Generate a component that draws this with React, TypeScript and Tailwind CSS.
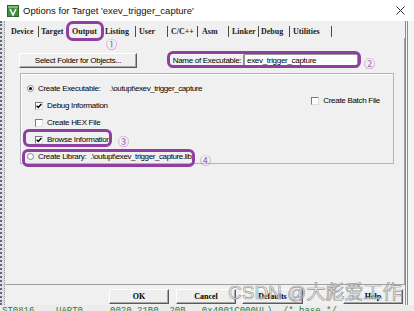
import type { ReactNode } from 'react';

// Keil "Options for Target" dialog, Output tab, with purple hand-drawn marks.

function KeilIcon() {
  return (
    <svg width="12" height="12" viewBox="0 0 12 12" aria-hidden>
      <rect x="0.5" y="0.5" width="11" height="11" fill="#3f8f3a" stroke="#2a6526" />
      <rect x="1" y="1" width="10" height="2" fill="#7fbf6a" />
      <path d="M3 4 L6 10 L9 4" fill="none" stroke="#fff" strokeWidth="1.6" />
    </svg>
  );
}

function Check({ checked }: { checked?: boolean }) {
  return (
    <span className="grid h-[8px] w-[8px] shrink-0 place-items-center border border-b-[#dcdcdc] border-l-[#7a7a7a] border-r-[#dcdcdc] border-t-[#7a7a7a] bg-white">
      {checked && (
        <svg width="6" height="6" viewBox="0 0 6 6" aria-hidden>
          <path d="M0.6 2.8 L2.3 4.5 L5.4 1" fill="none" stroke="#000" strokeWidth="1.5" />
        </svg>
      )}
    </span>
  );
}

function Radio({ checked }: { checked?: boolean }) {
  return (
    <span className="grid h-[7px] w-[7px] shrink-0 place-items-center rounded-full border border-[#8a8a8a] bg-white">
      {checked && <span className="h-[3px] w-[3px] rounded-full bg-black" />}
    </span>
  );
}

function Row({ children, className = '' }: { children: ReactNode; className?: string }) {
  return <div className={'flex h-[17px] items-center whitespace-nowrap ' + className}>{children}</div>;
}

function Sep() {
  return <span className="h-[11px] w-[1px] shrink-0 bg-[#4a4a4a]" />;
}

function DlgButton({ children, className }: { children: ReactNode; className: string }) {
  return (
    <button
      type="button"
      className={
        'grid h-[15px] place-items-center whitespace-nowrap border border-b-[#5a5a5a] border-l-white border-r-[#5a5a5a] border-t-white bg-[#efefef] shadow-[inset_-1px_-1px_0_#a8a8a8] ' +
        className
      }
    >
      {children}
    </button>
  );
}

export default function App() {
  return (
    <div className="relative h-[311px] w-[414px] overflow-hidden bg-[#f0f0f0] font-['Liberation_Sans',sans-serif] text-black">
      {/* title bar */}
      <div className="flex h-[21px] items-center bg-white pl-[7px] pr-[9px]">
        <KeilIcon />
        <span className="ml-[4px] text-[9.5px] leading-none text-[#111]">Options for Target 'exev_trigger_capture'</span>
        <svg className="ml-auto" width="9" height="9" viewBox="0 0 9 9" aria-hidden>
          <path d="M0.5 0.5 L8.5 8.5 M8.5 0.5 L0.5 8.5" stroke="#333" strokeWidth="1" />
        </svg>
      </div>

      <div className="flex h-[284px]">
        <div className="w-[5px] shrink-0 border-l-2 border-r border-dotted border-l-[#5b6a84] border-r-[#9a9a9a] bg-[#dedede]" />

        <div className="flex w-[400px] flex-col">
          {/* tabs */}
          <div className="flex h-[17px] items-center pl-[6px] pt-[4px] font-['Liberation_Serif',serif] text-[8px] font-bold leading-none text-[#222]">
            <span className="w-[27px]">Device</span>
            <Sep />
            <span className="ml-[2px] w-[31px]">Target</span>
            <span className="w-[33px]">Output</span>
            <span className="w-[30px]">Listing</span>
            <Sep />
            <span className="ml-[3px] w-[28px]">User</span>
            <Sep />
            <span className="ml-[3px] w-[26px]">C/C++</span>
            <Sep />
            <span className="ml-[4px] w-[26px]">Asm</span>
            <Sep />
            <span className="ml-[3px] w-[26px]">Linker</span>
            <Sep />
            <span className="ml-[2px] w-[28px]">Debug</span>
            <Sep />
            <span className="ml-[3px] w-[38px]">Utilities</span>
            <Sep />
          </div>

          {/* page */}
          <div className="h-[247px] border-b border-r border-[#a0a0a0] text-[8px] tracking-[-0.3px]">
            <div className="mt-[15px] flex items-center">
              <DlgButton className="ml-[14px] w-[118px]">Select Folder for Objects...</DlgButton>
              <span className="ml-[33px] grid h-[14px] w-[74px] place-items-center whitespace-nowrap border border-b-[#8a8a8a] border-l-white border-r-[#8a8a8a] border-t-white">
                Name of Executable:
              </span>
              <span className="flex h-[14px] w-[114px] items-center whitespace-nowrap border border-[#9a9a9a] bg-white pl-[2px]">
                exev_trigger_capture
              </span>
            </div>

            <div className="ml-[15px] mr-[10px] mt-[5px] flex h-[91px] justify-between border border-[#b4b4b4] shadow-[inset_1px_1px_0_#fff]">
              <div className="pl-[6px] pt-[6px]">
                <Row>
                  <Radio checked />
                  <span className="ml-[4px]">Create Executable:</span>
                  <span className="ml-[9px] tracking-[-0.4px]">.\outupt\exev_trigger_capture</span>
                </Row>
                <Row className="pl-[8px]">
                  <Check checked />
                  <span className="ml-[4px]">Debug Information</span>
                </Row>
                <Row className="pl-[8px]">
                  <Check />
                  <span className="ml-[4px]">Create HEX File</span>
                </Row>
                <Row className="pl-[8px]">
                  <Check checked />
                  <span className="ml-[4px]">Browse Information</span>
                </Row>
                <Row>
                  <Radio />
                  <span className="ml-[4px]">Create Library:</span>
                  <span className="ml-[4px] tracking-[-0.4px]">.\outupt\exev_trigger_capture.lib</span>
                </Row>
              </div>
              <div className="pr-[13px] pt-[18px]">
                <Row>
                  <Check />
                  <span className="ml-[4px]">Create Batch File</span>
                </Row>
              </div>
            </div>
          </div>

          {/* buttons */}
          <div className="flex h-[20px] items-start pt-[4px] font-['Liberation_Serif',serif] text-[8px] font-bold">
            <DlgButton className="ml-[104px] w-[60px]">OK</DlgButton>
            <DlgButton className="ml-[7px] w-[60px]">Cancel</DlgButton>
            <DlgButton className="ml-[6px] w-[61px]">Defaults</DlgButton>
            <DlgButton className="ml-[40px] w-[60px]">Help</DlgButton>
          </div>
        </div>

        <div className="w-[9px] shrink-0 border-l-[3px] border-double border-[#8c8c8c] bg-[#f4f4f4]" />
      </div>

      {/* window behind */}
      <div className="h-[6px] overflow-hidden whitespace-pre bg-[#ececec] pl-[2px] font-['Liberation_Mono',monospace] text-[9px] leading-[12px] text-[#2f7a2f]">
        ST0816    UART0     0020 21B0  20B   0x4001C000UL)  /* base */
      </div>

      {/* annotations */}
      <span className="absolute left-[66px] top-[21px] h-[20px] w-[38px] rounded-[7px] border-[3px] border-[#8e3fa0]" />
      <span className="absolute left-[106px] top-[39px] font-['Noto_Sans_CJK_SC',sans-serif] text-[11px] leading-none text-[#a45bc0]">①</span>
      <span className="absolute left-[167px] top-[51px] h-[17px] w-[194px] rounded-[6px] border-[3px] border-[#8e3fa0]" />
      <span className="absolute left-[364px] top-[58px] font-['Noto_Sans_CJK_SC',sans-serif] text-[11px] leading-none text-[#a45bc0]">②</span>
      <span className="absolute left-[23px] top-[129px] h-[18px] w-[89px] rounded-[6px] border-[3px] border-[#8e3fa0]" />
      <span className="absolute left-[118px] top-[136px] font-['Noto_Sans_CJK_SC',sans-serif] text-[11px] leading-none text-[#a45bc0]">③</span>
      <span className="absolute left-[22px] top-[149px] h-[18px] w-[173px] rounded-[6px] border-[3px] border-[#8e3fa0]" />
      <span className="absolute left-[200px] top-[155px] font-['Noto_Sans_CJK_SC',sans-serif] text-[11px] leading-none text-[#a45bc0]">④</span>

      {/* watermark */}
      <span className="absolute left-[228px] top-[283px] font-['Liberation_Sans','Noto_Sans_CJK_SC',sans-serif] text-[19px] leading-none text-white/50 [-webkit-text-stroke:0.7px_#9a9a9a]">
        CSDN @大彪爱工作
      </span>
    </div>
  );
}
